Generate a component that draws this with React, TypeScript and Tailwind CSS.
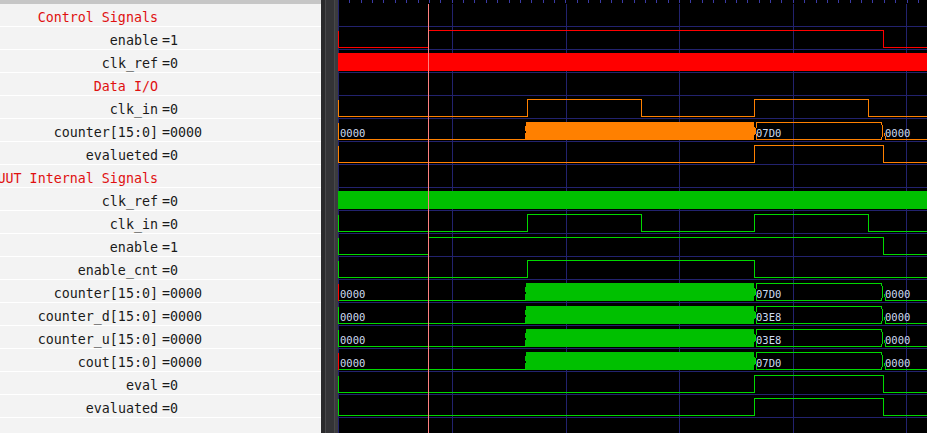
import type { ReactNode } from 'react'

const ROW = 23
const X0 = 338
const X1 = 927
const RED = '#ff0000'
const ORANGE = '#ff8000'
const GREEN = '#00d800'
const GREEN_FILL = '#00c000'
const GRID = '#22226e'

const rowTop = (r: number) => 4 + ROW * r

type Item =
  | { kind: 'head'; label: string }
  | { kind: 'sig'; name: string; value: string }
  | { kind: 'empty' }

const items: Item[] = [
  { kind: 'head', label: 'Control Signals' },
  { kind: 'sig', name: 'enable', value: '=1' },
  { kind: 'sig', name: 'clk_ref', value: '=0' },
  { kind: 'head', label: 'Data I/O' },
  { kind: 'sig', name: 'clk_in', value: '=0' },
  { kind: 'sig', name: 'counter[15:0]', value: '=0000' },
  { kind: 'sig', name: 'evalueted', value: '=0' },
  { kind: 'head', label: 'UUT Internal Signals' },
  { kind: 'sig', name: 'clk_ref', value: '=0' },
  { kind: 'sig', name: 'clk_in', value: '=0' },
  { kind: 'sig', name: 'enable', value: '=1' },
  { kind: 'sig', name: 'enable_cnt', value: '=0' },
  { kind: 'sig', name: 'counter[15:0]', value: '=0000' },
  { kind: 'sig', name: 'counter_d[15:0]', value: '=0000' },
  { kind: 'sig', name: 'counter_u[15:0]', value: '=0000' },
  { kind: 'sig', name: 'cout[15:0]', value: '=0000' },
  { kind: 'sig', name: 'eval', value: '=0' },
  { kind: 'sig', name: 'evaluated', value: '=0' },
  { kind: 'empty' },
]

function NameRow({ item }: { item: Item }) {
  let content: ReactNode = null
  if (item.kind === 'head') {
    content = (
      <div className="w-[158px] shrink-0 flex justify-end whitespace-nowrap text-[#e01010]">
        <span>{item.label}</span>
      </div>
    )
  } else if (item.kind === 'sig') {
    content = (
      <>
        <div className="w-[158px] shrink-0 flex justify-end whitespace-nowrap">
          <span>{item.name}</span>
        </div>
        <span className="ml-[4px] whitespace-nowrap">{item.value}</span>
      </>
    )
  }
  return (
    <div className="h-[23px] shrink-0 border-b border-white flex items-center pt-[5px] overflow-hidden">
      {content}
    </div>
  )
}

function bitPath(r: number, edges: number[]) {
  const hi = rowTop(r) + 3.5
  const lo = rowTop(r) + 20.5
  let d = `M${X0 + 0.5} ${hi} V${lo}`
  let level = 0
  for (const e of edges) {
    d += ` H${e + 0.5} V${level === 0 ? hi : lo}`
    level ^= 1
  }
  return d + ` H${X1}`
}

function Bit({ r, edges, color }: { r: number; edges: number[]; color: string }) {
  return <path d={bitPath(r, edges)} stroke={color} fill="none" />
}

function Fill({ r, color }: { r: number; color: string }) {
  return <rect x={X0} y={rowTop(r) + 3} width={X1 - X0} height={18} fill={color} />
}

function Bus({
  r,
  color,
  fill,
  value,
  marker,
}: {
  r: number
  color: string
  fill: string
  value: string
  marker: string
}) {
  const t = rowTop(r)
  const hi = t + 3.5
  const lo = t + 20.5
  const mid = t + 12
  const txt = '#cfdcf0'
  return (
    <g>
      <path d={`M${X0 + 0.5} ${lo} H526`} stroke={color} fill="none" />
      <path d={`M${X0 + 0.5} ${hi} V${lo}`} stroke={marker} fill="none" />
      <polygon
        points={`526,${t + 3} 754,${t + 3} 755,${mid} 754,${t + 21} 526,${t + 21} 524.5,${t + 17} 526,${t + 13} 524.5,${t + 9} 526,${t + 6}`}
        fill={fill}
      />
      <path
        d={`M755.5 ${mid} L757 ${hi} H881.5 L883 ${mid} L881.5 ${lo} H757 Z`}
        stroke={color}
        fill="none"
      />
      <path d={`M884.5 ${mid + 2} L885.5 ${lo} H${X1}`} stroke={color} fill="none" />
      <g fontFamily='"DejaVu Sans Mono", monospace' fontSize={10.5} fill={txt}>
        <text x={340} y={t + 17.5}>0000</text>
        <text x={756} y={t + 17.5}>{value}</text>
        <text x={885} y={t + 17.5}>0000</text>
      </g>
    </g>
  )
}

function Waves() {
  const majors = [452, 566, 679, 793, 906]
  const ticks: number[] = []
  for (let x = X0 + 11.37; x < X1; x += 11.37) ticks.push(Math.round(x) + 0.5)
  const rows: number[] = []
  for (let k = 0; k <= 17; k++) rows.push(26 + ROW * k + 0.5)
  return (
    <svg
      width={X1 - X0}
      height={433}
      viewBox={`${X0} 0 ${X1 - X0} 433`}
      shapeRendering="crispEdges"
      className="block"
    >
      <rect x={X0} y={0} width={X1 - X0} height={433} fill="#000" />
      {ticks.map((x) => (
        <line key={x} x1={x} x2={x} y1={0} y2={3} stroke="#3a3aa6" />
      ))}
      {rows.map((y) => (
        <line key={y} x1={X0} x2={X1} y1={y} y2={y} stroke={GRID} />
      ))}
      <line x1={X0 + 0.5} x2={X0 + 0.5} y1={0} y2={433} stroke={GRID} />
      {majors.map((x) => (
        <line key={x} x1={x + 0.5} x2={x + 0.5} y1={4} y2={433} stroke={GRID} />
      ))}

      {/* Control Signals */}
      <Bit r={1} edges={[428, 883]} color={RED} />
      <Fill r={2} color={RED} />

      {/* Data I/O */}
      <Bit r={4} edges={[527, 641, 754, 868]} color={ORANGE} />
      <Bus r={5} color={ORANGE} fill={ORANGE} value="07D0" marker={ORANGE} />
      <Bit r={6} edges={[754, 883]} color={ORANGE} />

      {/* UUT Internal Signals */}
      <Fill r={8} color={GREEN_FILL} />
      <Bit r={9} edges={[527, 641, 754, 868]} color={GREEN} />
      <Bit r={10} edges={[428, 883]} color={GREEN} />
      <Bit r={11} edges={[527, 754]} color={GREEN} />
      <Bus r={12} color={GREEN} fill={GREEN_FILL} value="07D0" marker={RED} />
      <Bus r={13} color={GREEN} fill={GREEN_FILL} value="03E8" marker={GREEN} />
      <Bus r={14} color={GREEN} fill={GREEN_FILL} value="03E8" marker={GREEN} />
      <Bus r={15} color={GREEN} fill={GREEN_FILL} value="07D0" marker={RED} />
      <Bit r={16} edges={[754, 883]} color={GREEN} />
      <Bit r={17} edges={[754, 883]} color={GREEN} />

      {/* cursor */}
      <line x1={428.5} x2={428.5} y1={4} y2={433} stroke="#ff8080" />
    </svg>
  )
}

export default function App() {
  return (
    <div className="flex w-[927px] h-[433px] overflow-hidden bg-black">
      {/* signal names */}
      <div className="w-[321px] shrink-0 flex flex-col bg-[#f3f3f3] text-[#1a1a1a] text-[13.33px] font-['DejaVu_Sans_Mono',monospace] overflow-hidden">
        <div className="h-[4px] shrink-0 overflow-hidden bg-[#c6c6c6]">
          <div className="-mt-[12px] pl-[2px] leading-[16px] text-[#333]">Time</div>
        </div>
        {items.map((it, i) => (
          <NameRow key={i} item={it} />
        ))}
      </div>

      {/* splitter */}
      <div className="w-[17px] shrink-0 flex">
        <div className="w-[4px] bg-[#2a2a2c]" />
        <div className="w-[1px] bg-[#474749]" />
        <div className="w-[8px] bg-[#333336]" />
        <div className="w-[1px] bg-[#48484a]" />
        <div className="w-[3px] bg-[#3b3b3e]" />
      </div>

      <Waves />
    </div>
  )
}
